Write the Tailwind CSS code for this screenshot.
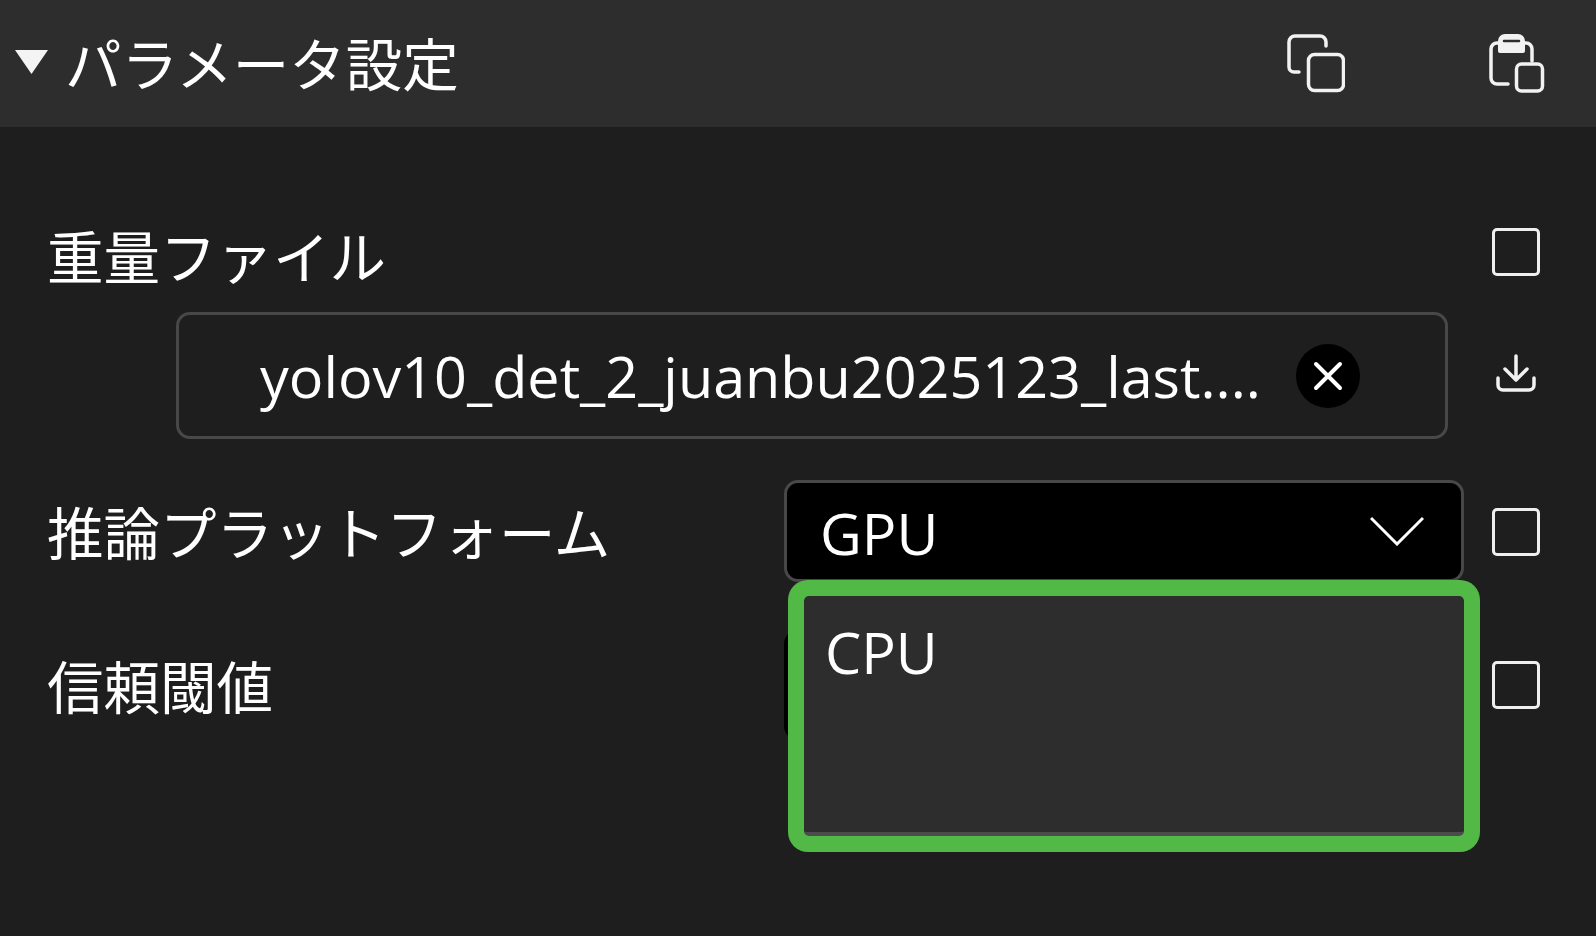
<!DOCTYPE html>
<html lang="ja">
<head>
<meta charset="utf-8">
<title>パラメータ設定</title>
<script src="https://cdn.jsdelivr.net/npm/@tailwindcss/browser@4"></script>
</head>
<body class="bg-[#1e1e1e] text-white overflow-hidden">
<div class="relative w-[1596px] h-[936px] font-['Open_Sans','Noto_Sans_CJK_JP',sans-serif] text-[56.500px] leading-none">
  <header class="h-[127px] bg-[#2d2d2d] flex items-center pl-[15px] pr-[51px]">
    <svg class="w-[33px] h-[24px] mb-[3px]" viewBox="0 0 33 24"><path d="M0 0H33L16.500 24Z" fill="#f4f4f4"/></svg>
    <h1 class="ml-[17px] flex-1 font-normal text-[56.500px] mt-[4px]">パラメータ設定</h1>
    <svg class="w-[58px] h-[60px] mr-[144px]" viewBox="0 0 58 60" fill="none" stroke="#f2f2f2" stroke-width="3.500" stroke-linecap="round"><path d="M39 12V8a6 6 0 0 0-6-6H8a6 6 0 0 0-6 6v25a5 5 0 0 0 5 5h5"/><rect x="21.500" y="20.500" width="35" height="36" rx="6"/></svg>
    <svg class="w-[56px] h-[60px] mt-[-1px]" viewBox="0 0 56 60" fill="none" stroke="#f2f2f2" stroke-width="3.500" stroke-linecap="round"><path d="M11 10H8a6 6 0 0 0-6 6v29a6 6 0 0 0 6 6h11M34 10h3a6 6 0 0 1 6 6v12"/><path d="M9 18V8a7 7 0 0 1 7-7h13a7 7 0 0 1 7 7v10a2 2 0 0 1-2 2H11a2 2 0 0 1-2-2Z" fill="#f2f2f2" stroke="none"/><path d="M15 8h15" stroke="#2d2d2d" stroke-width="2.500"/><rect x="27.500" y="31" width="26" height="27" rx="5"/></svg>
  </header>

  <main class="pl-[47px] pr-[56px] pt-[101px]">
    <div class="flex items-center h-[48px]">
      <span class="flex-1 mt-[12px]">重量ファイル</span>
      <span class="w-[48px] h-[48px] rounded-[5px] border-[3px] border-[#eeeeee]"></span>
    </div>

    <div class="flex items-center mt-[36px] ml-[129px]">
      <div class="w-[1272px] h-[127px] rounded-[14px] border-[3px] border-[#484848] flex items-center pl-[81px]">
        <span class="w-[1000px] whitespace-nowrap text-[57.500px] mt-[3px]">yolov10_det_2_juanbu2025123_last....</span>
        <span class="ml-[36px] w-[64px] h-[64px] rounded-full bg-black flex items-center justify-center">
          <svg class="w-[30px] h-[30px]" viewBox="0 0 30 30" fill="none" stroke="#fff" stroke-width="4" stroke-linecap="round"><path d="M3 3L27 27M27 3L3 27"/></svg>
        </span>
      </div>
      <svg class="ml-[48px] w-[40px] h-[38px] mt-[-6px]" viewBox="0 0 40 38" fill="none" stroke="#f2f2f2" stroke-width="3.500" stroke-linecap="round" stroke-linejoin="round"><path d="M20 2V25M9 15L20 26L31 15"/><path d="M2 24v7a5 5 0 0 0 5 5h26a5 5 0 0 0 5-5v-7"/></svg>
    </div>

    <div class="flex items-center mt-[41px] h-[100px]">
      <span class="flex-1 mt-[8px]">推論プラットフォーム</span>
      <div class="w-[680px] h-[102px] mt-[2px] bg-black rounded-[14px] border-[3px] border-[#484848] flex items-center justify-between pl-[33px] pr-[37px]">
        <span class="text-[57.500px] mt-[6px]">GPU</span>
        <svg class="w-[54px] h-[30px]" viewBox="0 0 54 30" fill="none" stroke="#fff" stroke-width="3"><path d="M1 2L27 28L53 2"/></svg>
      </div>
      <span class="ml-[28px] mt-[4px] w-[48px] h-[48px] rounded-[5px] border-[3px] border-[#eeeeee]"></span>
    </div>

    <div class="flex items-center mt-[50px] h-[110px]">
      <span class="flex-1 mt-[6px]">信頼閾値</span>
      <div class="w-[680px] h-[110px] bg-black rounded-[14px]"></div>
      <span class="ml-[28px] w-[48px] h-[48px] rounded-[5px] border-[3px] border-[#eeeeee]"></span>
    </div>
  </main>

  <div class="absolute left-[788px] top-[580px] w-[692px] h-[272px] rounded-[20px] bg-[#52b946] p-[16px]">
    <div class="h-full rounded-[5px] bg-[#2d2d2d] border-b-[4px] border-[#4c4c4c] pl-[21px] pt-[28px] text-[57.500px]">CPU</div>
  </div>
</div>
</body>
</html>
